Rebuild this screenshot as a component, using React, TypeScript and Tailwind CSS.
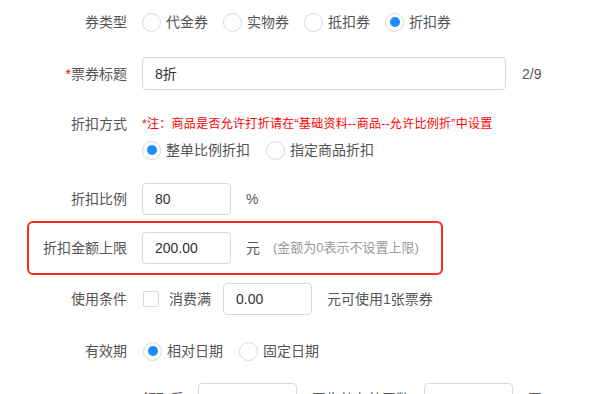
import React from "react";

const Radio = ({ checked, label }: { checked?: boolean; label: string }) => (
  <div className="flex items-center">
    <span className="w-[19px] h-[19px] rounded-full border border-[#d9d9d9] bg-white flex items-center justify-center shrink-0">
      {checked && <span className="w-[10px] h-[10px] rounded-full bg-[#1a8cff]" />}
    </span>
    <span className="ml-[5px] text-[14px] text-[#555]">{label}</span>
  </div>
);

const Input = ({ value, w, className = "" }: { value?: string; w: string; className?: string }) => (
  <div
    className={`${w} h-[32px] border border-[#d9d9d9] rounded-[4px] bg-white flex items-center pl-[12px] text-[14px] text-[#333] shrink-0 ${className}`}
  >
    {value}
  </div>
);

const Label = ({ children }: { children: React.ReactNode }) => (
  <div className="w-[127px] shrink-0 text-right text-[14px] text-[#555]">{children}</div>
);

export default function App() {
  return (
    <div className="w-[605px] h-[394px] overflow-hidden bg-white font-['Liberation_Sans','Noto_Sans_CJK_SC',sans-serif] leading-[20px]">
      {/* 券类型 */}
      <div className="h-[44px] flex items-center">
        <Label>券类型</Label>
        <div className="ml-[15px] flex items-center gap-[15px]">
          <Radio label="代金券" />
          <Radio label="实物券" />
          <Radio label="抵扣券" />
          <Radio label="折扣券" checked />
        </div>
      </div>

      {/* 票券标题 */}
      <div className="mt-[13px] h-[33px] flex items-center">
        <Label>
          <span className="text-[#ff0000]">*</span>票券标题
        </Label>
        <Input value="8折" w="w-[364px]" className="ml-[15px] h-[33px]" />
        <span className="ml-[16px] text-[14px] text-[#555]">2/9</span>
      </div>

      {/* 折扣方式 */}
      <div className="mt-[24px] flex">
        <div className="h-[20px] flex items-center">
          <Label>折扣方式</Label>
        </div>
        <div className="ml-[15px] flex flex-col">
          <div className="h-[20px] flex items-center text-[12px] text-[#ff0000] tracking-[0.3px]">
            *注：商品是否允许打折请在“基础资料--商品--允许比例折”中设置
          </div>
          <div className="h-[32px] flex items-center gap-[16px]">
            <Radio label="整单比例折扣" checked />
            <Radio label="指定商品折扣" />
          </div>
        </div>
      </div>

      {/* 折扣比例 */}
      <div className="mt-[17px] h-[32px] flex items-center">
        <Label>折扣比例</Label>
        <Input value="80" w="w-[89px]" className="ml-[15px]" />
        <span className="ml-[15px] text-[14px] text-[#555]">%</span>
      </div>

      {/* 折扣金额上限 */}
      <div className="mt-[6px] ml-[27px] w-[416px] h-[54px] border-2 border-[#ff2a1a] rounded-[6px] flex items-center">
        <div className="w-[98px] shrink-0 text-right text-[14px] text-[#555]">折扣金额上限</div>
        <Input value="200.00" w="w-[89px]" className="ml-[15px]" />
        <span className="ml-[15px] text-[14px] text-[#555]">元</span>
        <span className="ml-[13px] text-[13px] text-[#999]">(金额为0表示不设置上限)</span>
      </div>

      {/* 使用条件 */}
      <div className="mt-[8px] h-[32px] flex items-center">
        <Label>使用条件</Label>
        <span className="ml-[16px] w-[16px] h-[16px] border border-[#d9d9d9] rounded-[2px] bg-white shrink-0" />
        <span className="ml-[10px] text-[14px] text-[#555]">消费满</span>
        <Input value="0.00" w="w-[89px]" className="ml-[12px]" />
        <span className="ml-[15px] text-[14px] text-[#555]">元可使用1张票券</span>
      </div>

      {/* 有效期 */}
      <div className="mt-[20px] h-[32px] flex items-center">
        <Label>有效期</Label>
        <div className="ml-[16px] flex items-center gap-[16px]">
          <Radio label="相对日期" checked />
          <Radio label="固定日期" />
        </div>
      </div>

      {/* sub row */}
      <div className="mt-[16px] h-[32px] flex items-center">
        <div className="w-[127px] shrink-0" />
        <span className="ml-[15px] text-[14px] text-[#555]">领取后</span>
        <Input value="" w="w-[99px]" className="ml-[14px]" />
        <span className="ml-[15px] text-[14px] text-[#555]">天生效有效天数</span>
        <Input value="" w="w-[89px]" className="ml-[14px]" />
        <span className="ml-[15px] text-[14px] text-[#555]">天</span>
      </div>
    </div>
  );
}
